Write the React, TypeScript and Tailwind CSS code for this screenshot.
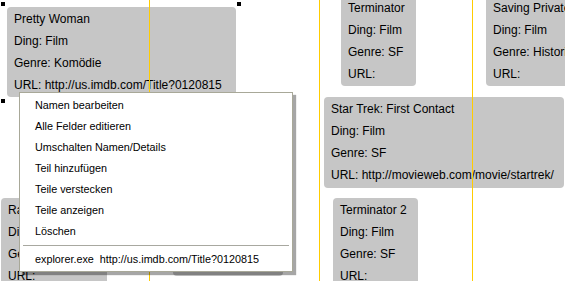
import { FC } from 'react'

type CardData = {
  x: number
  y: number
  w: number
  h: number
  lines: string[]
}

const cards: CardData[] = [
  { x: 7, y: 7, w: 229, h: 90, lines: ['Pretty Woman', 'Ding: Film', 'Genre: Komödie', 'URL: http://us.imdb.com/Title?0120815'] },
  { x: 341, y: -4, w: 75, h: 90, lines: ['Terminator', 'Ding: Film', 'Genre: SF', 'URL:'] },
  { x: 486, y: -4, w: 110, h: 90, lines: ['Saving Private Ryan', 'Ding: Film', 'Genre: Historie', 'URL:'] },
  { x: 324, y: 97, w: 240, h: 91, lines: ['Star Trek: First Contact', 'Ding: Film', 'Genre: SF', 'URL: http://movieweb.com/movie/startrek/'] },
  { x: 333, y: 198, w: 85, h: 100, lines: ['Terminator 2', 'Ding: Film', 'Genre: SF', 'URL:'] },
  { x: 1, y: 198, w: 106, h: 100, lines: ['Rain Man', 'Ding: Film', 'Genre: Drama', 'URL:'] },
  { x: 173, y: 176, w: 110, h: 100, lines: ['Sieben', 'Ding: Film', 'Genre: Thriller', 'URL:'] },
]

const menuItems = [
  'Namen bearbeiten',
  'Alle Felder editieren',
  'Umschalten Namen/Details',
  'Teil hinzufügen',
  'Teile verstecken',
  'Teile anzeigen',
  'Löschen',
]

const guides = [149, 319, 472]

const Card: FC<{ card: CardData }> = ({ card }) => (
  <div
    className="absolute overflow-hidden whitespace-nowrap rounded-[4px] bg-[#c6c6c6] px-[7px] pt-[1px] text-[12px] text-black"
    style={{ left: card.x, top: card.y, width: card.w, height: card.h }}
  >
    {card.lines.map((line) => (
      <div key={line} className="h-[22px] leading-[22px]">{line}</div>
    ))}
  </div>
)

const App: FC = (): JSX.Element => {
  return (
    <div className="relative h-[281px] w-[565px] overflow-hidden bg-white font-['Liberation_Sans',Arial,sans-serif]">
      {cards.map((card) => (
        <Card key={card.lines[0]} card={card} />
      ))}

      {guides.map((x) => (
        <div key={x} className="absolute top-0 h-full w-px bg-[#ffcc00]" style={{ left: x }} />
      ))}

      {/* selection handles */}
      <div className="absolute left-[1px] top-[2px] h-[4px] w-[4px] bg-black" />
      <div className="absolute left-[237px] top-[2px] h-[4px] w-[4px] bg-black" />
      <div className="absolute left-[1px] top-[99px] h-[4px] w-[4px] bg-black" />

      {/* context menu */}
      <div className="absolute left-[19px] top-[92px] w-[274px] border border-[#a8a898] bg-white pt-[2px] pb-[1px] text-[10.8px] text-black shadow-[3px_3px_1px_rgba(0,0,0,0.35)]">
        {menuItems.map((item) => (
          <div key={item} className="h-[21px] pl-[15px] leading-[21px]">{item}</div>
        ))}
        <div className="mx-[3px] my-[3px] h-px bg-[#a8a8a0]" />
        <div className="h-[21px] whitespace-pre pl-[15px] leading-[21px]">explorer.exe  http://us.imdb.com/Title?0120815</div>
      </div>
    </div>
  )
}

export default App
